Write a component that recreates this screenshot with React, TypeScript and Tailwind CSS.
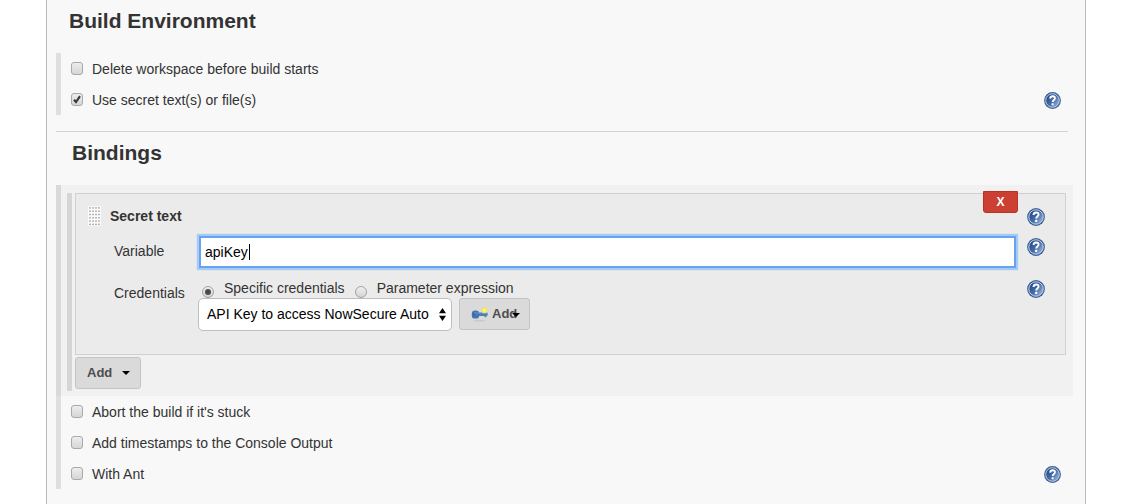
import { useId, useState } from "react";
import type { ReactNode } from "react";

function HelpButton({ topic, small = false }: { topic: string; small?: boolean }) {
  const id = useId();
  return (
    <button
      type="button"
      aria-label={`Help for feature: ${topic}`}
      className={small ? "block size-[17px] shrink-0" : "block size-[18px] shrink-0"}
    >
      <svg viewBox="0 0 18 18" className="size-full" aria-hidden="true">
        <defs>
          <linearGradient id={id} x1="0" y1="0.1" x2="1" y2="0.9">
            <stop offset="0.1" stopColor="#24498a" />
            <stop offset="0.5" stopColor="#456ba8" />
            <stop offset="1" stopColor="#a3bce0" />
          </linearGradient>
        </defs>
        <circle cx="9" cy="9" r="8.9" fill="#3c6095" />
        <circle cx="9" cy="9" r="7.2" fill={`url(#${id})`} stroke="#c3d1e6" strokeWidth="1" />
        <path
          d="M6.5 7C6.6 5.3 7.6 4.5 9.1 4.5c1.6 0 2.5.8 2.5 2.1 0 1.9-2.4 1.9-2.4 4"
          fill="none"
          stroke="#fff"
          strokeWidth="1.9"
        />
        <rect x="8.1" y="11.8" width="2.1" height="2.1" rx="0.5" fill="#fff" />
      </svg>
    </button>
  );
}

function OptionRow({ label, checked = false, help = false }: { label: string; checked?: boolean; help?: boolean }) {
  return (
    <div className="flex h-[31px] items-center justify-between pr-3 pl-[10px]">
      <label className="flex items-center gap-[9px]">
        <span className="relative block h-[13px] w-3">
          <input
            type="checkbox"
            defaultChecked={checked}
            className="peer block h-[13px] w-3 appearance-none rounded-[3px] border border-[#a9a9a9] bg-linear-to-b from-[#ededed] to-[#d6d6d6]"
          />
          <svg
            viewBox="0 0 12 13"
            className="pointer-events-none absolute inset-0 hidden h-[13px] w-3 peer-checked:block"
            aria-hidden="true"
          >
            <path d="M3 6.8 5 9 9 3.2" fill="none" stroke="#383838" strokeWidth="2.1" />
          </svg>
        </span>
        <span className="pt-px">{label}</span>
      </label>
      {help && (
        <div className="pt-[2px]">
          <HelpButton topic={label} small />
        </div>
      )}
    </div>
  );
}

function Choice({ label, checked, onSelect }: { label: string; checked: boolean; onSelect: () => void }) {
  return (
    <label className="flex gap-[10px]">
      <span className="relative mt-[6px] block size-3">
        <input
          type="radio"
          name="credentialKind"
          checked={checked}
          onChange={onSelect}
          className="peer block size-3 appearance-none rounded-full border border-[#a2a2a2] bg-linear-to-b from-[#f0f0f0] to-[#d4d4d4]"
        />
        <span className="pointer-events-none absolute inset-[3px] hidden rounded-full bg-[#4a4a4a] peer-checked:block" />
      </span>
      <span className="leading-4">{label}</span>
    </label>
  );
}

function Caret({ className = "" }: { className?: string }) {
  return (
    <svg viewBox="0 0 8 4" className={`h-1 w-2 ${className}`} aria-hidden="true">
      <path d="M0 0h8L4 4z" fill="#000" />
    </svg>
  );
}

function KeyIcon() {
  return (
    <svg viewBox="0 0 18 16" className="h-4 w-[18px]" aria-hidden="true">
      <ellipse cx="8.5" cy="14.6" rx="6" ry="0.9" fill="#c9c9c9" />
      <path d="M7 6.8h9.6v3h-1.2v1.4h-1.8v-1.2H7z" fill="#4b7cbb" />
      <rect x="0.8" y="4.6" width="7.4" height="8" rx="3.2" fill="#4374b4" />
      <path d="M3.4 7h12.4" stroke="#6d97cc" strokeWidth="1" />
      <circle cx="3" cy="8.6" r="0.8" fill="#2c5591" />
      <circle cx="13.4" cy="4.4" r="2.8" fill="#f5e654" />
      <circle cx="13.4" cy="4.4" r="1.3" fill="#fff88a" />
    </svg>
  );
}

function DragHandle() {
  const rows = [0, 1, 2, 3, 4, 5];
  const cols = [0, 1, 2, 3];
  return (
    <svg viewBox="0 0 13 20" className="h-5 w-[13px]" aria-hidden="true">
      <rect width="13" height="20" fill="#fafafa" />
      {rows.map((r) =>
        cols.map((c) => <rect key={`${r}-${c}`} x={1 + c * 3} y={1.2 + r * 3.3} width="2" height="1.4" fill="#b4b4ae" />),
      )}
    </svg>
  );
}

function SectionTitle({ children, className }: { children: ReactNode; className: string }) {
  return <h2 className={`h-[53px] pt-[7px] text-[21px] leading-7 font-bold text-[#333] ${className}`}>{children}</h2>;
}

function SecretText() {
  const [variable, setVariable] = useState("apiKey");
  const [kind, setKind] = useState("specific");
  return (
    <section className="relative mr-[7px] border border-[#d0d0d0] bg-[#ebebeb] pt-3 pr-5 pb-[23px] pl-3">
      <button
        type="button"
        aria-label="Delete Secret text"
        className="absolute -top-[3px] right-[47px] h-[22px] w-[35px] rounded-b-[3px] border border-[#b93224] bg-[#cc4033] text-xs font-bold text-white"
      >
        X
      </button>
      <div className="flex h-5 items-center justify-between">
        <div className="flex items-center gap-[9px]">
          <DragHandle />
          <h3 className="font-bold">Secret text</h3>
        </div>
        <div className="pt-[2px]">
          <HelpButton topic="Secret text" />
        </div>
      </div>
      <div className="mt-[10px] flex items-start pl-[26px]">
        <label htmlFor="variable" className="w-[85px] pt-[5px]">
          Variable
        </label>
        <div className="relative mr-[11px] flex-1">
          <input
            id="variable"
            value={variable}
            onChange={(e) => setVariable(e.target.value)}
            className="block h-8 w-full border-2 border-[#67a4f0] bg-white pl-1 text-black shadow-[0_0_1px_2px_#a5caf8] outline-none"
          />
          <span className="pointer-events-none absolute top-2 left-[50px] h-4 w-px bg-black" />
        </div>
        <div className="pt-[2px]">
          <HelpButton topic="Variable" />
        </div>
      </div>
      <div className="mt-3 flex items-start pl-[26px]">
        <label htmlFor="credentials" className="w-[84px] pt-[3px]">
          Credentials
        </label>
        <div className="flex-1">
          <div className="flex h-[18px] gap-[10px] pl-1">
            <Choice label="Specific credentials" checked={kind === "specific"} onSelect={() => setKind("specific")} />
            <Choice label="Parameter expression" checked={kind === "parameter"} onSelect={() => setKind("parameter")} />
          </div>
          <div className="relative flex gap-[7px]">
            <div className="relative w-[254px]">
              <select
                id="credentials"
                className="block h-[33px] w-full appearance-none rounded-[5px] border border-[#bebebe] bg-white pr-4 pb-px pl-2 text-black"
              >
                <option>API Key to access NowSecure Auto</option>
              </select>
              <svg
                viewBox="0 0 7 13"
                className="pointer-events-none absolute top-[10px] right-[6px] h-[13px] w-[7px]"
                aria-hidden="true"
              >
                <path d="M0 5.2 3.5 0 7 5.2zM0 7.8 3.5 13 7 7.8z" fill="#000" />
              </svg>
            </div>
            <button
              type="button"
              className="relative flex h-8 w-[71px] items-center gap-[3px] rounded-[3px] border border-[#c3c3c3] bg-[#dadada] pl-[11px] text-[13px] font-bold text-[#4d4d4d]"
            >
              <KeyIcon />
              Add
              <Caret className="absolute top-[14px] right-[9px]" />
            </button>
          </div>
        </div>
        <HelpButton topic="Credentials" />
      </div>
    </section>
  );
}

export default function App() {
  return (
    <div className="bg-white font-['Liberation_Sans',Arial,sans-serif] text-sm leading-5 text-[#333]">
      <main className="mr-[47px] ml-[46px] min-h-screen border-x border-[#bbb] bg-[#f8f8f8] pr-3 pb-[15px] pl-[9px]">
        <SectionTitle className="pl-[13px]">Build Environment</SectionTitle>
        <div className="border-l-[5px] border-[#dfdfdf]">
          <OptionRow label="Delete workspace before build starts" />
          <OptionRow label="Use secret text(s) or file(s)" checked help />
        </div>
        <hr className="mt-4 mr-[5px] border-[#d3d3d3]" />
        <SectionTitle className="pl-4">Bindings</SectionTitle>
        <div className="border-l-[5px] border-[#d9d9d9] bg-[#f1f1f1] pt-2 pb-[5px] pl-[6px]">
          <div className="border-l-[5px] border-[#d5d5d5] pb-[2px] pl-[3px]">
            <SecretText />
            <button
              type="button"
              className="mt-[2px] flex h-8 w-[66px] items-center justify-between rounded-[3px] border border-[#c3c3c3] bg-[#dadada] pr-[10px] pl-[11px] text-[13px] font-bold text-[#4d4d4d]"
            >
              Add
              <Caret />
            </button>
          </div>
        </div>
        <div className="border-l-[5px] border-[#dfdfdf]">
          <OptionRow label="Abort the build if it's stuck" />
          <OptionRow label="Add timestamps to the Console Output" />
          <OptionRow label="With Ant" help />
        </div>
      </main>
    </div>
  );
}
